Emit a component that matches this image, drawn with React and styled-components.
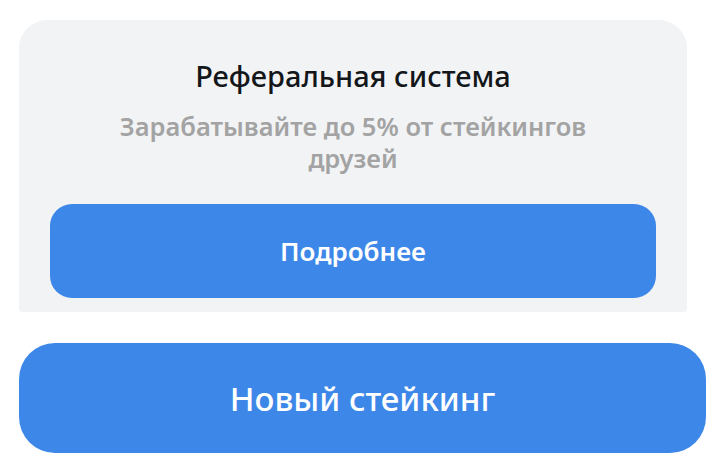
import React from 'react';
import styled, { createGlobalStyle } from 'styled-components';

const GlobalStyle = createGlobalStyle`
  body {
    margin: 0;
    background: #ffffff;
    font-family: 'Noto Sans', 'Open Sans', sans-serif;
  }
`;

const Page = styled.div`
  display: flex;
  flex-direction: column;
  align-items: flex-start;
  gap: 31px;
  padding: 20px 0 0 19px;
`;

const Card = styled.div`
  width: 668px;
  box-sizing: border-box;
  background: #f2f3f5;
  border-radius: 28px 28px 4px 4px;
  padding: 38px 31px 14px;
  display: flex;
  flex-direction: column;
  align-items: center;
`;

const Title = styled.h3`
  margin: 0;
  font-size: 29px;
  line-height: 36px;
  font-weight: 500;
  color: #14171a;
`;

const Subtitle = styled.p`
  margin: 16px 0 0;
  max-width: 500px;
  text-align: center;
  font-size: 25.5px;
  line-height: 32px;
  font-weight: 600;
  color: #a3a3a3;
`;

const Button = styled.button`
  box-sizing: border-box;
  width: ${(p) => p.$width};
  height: ${(p) => p.$height};
  margin-top: ${(p) => p.$top || 0};
  border: 0;
  border-radius: ${(p) => p.$radius};
  background: #3d87e8;
  color: #ffffff;
  font-family: inherit;
  font-size: ${(p) => p.$size};
  font-weight: ${(p) => p.$weight};
  cursor: pointer;
`;

export default function App() {
  return (
    <>
      <GlobalStyle />
      <Page>
        <Card>
          <Title>Реферальная система</Title>
          <Subtitle>Зарабатывайте до 5% от стейкингов друзей</Subtitle>
          <Button $width="100%" $height="94px" $top="30px" $radius="22px" $size="26px" $weight="600">
            Подробнее
          </Button>
        </Card>
        <Button $width="687px" $height="110px" $radius="36px" $size="33px" $weight="500">
          Новый стейкинг
        </Button>
      </Page>
    </>
  );
}
